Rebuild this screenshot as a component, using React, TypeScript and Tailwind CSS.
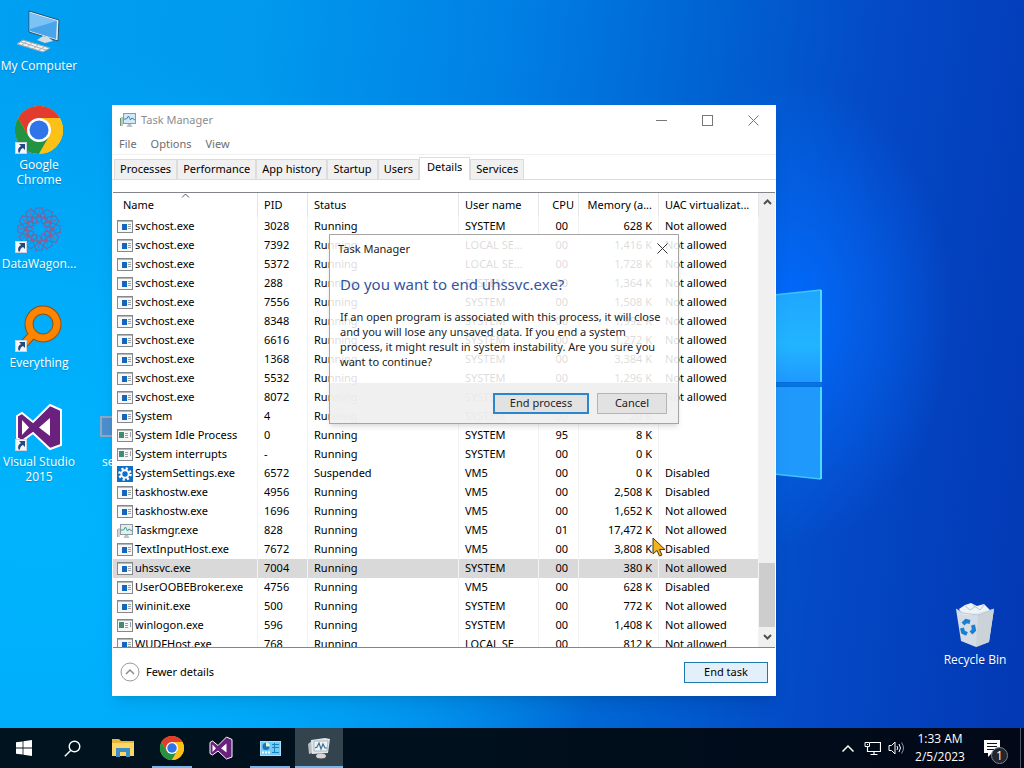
import React from "react";
import { clsx } from "clsx";

type ProcessIcon = "app" | "console" | "settings" | "taskmgr";

interface ProcessRow {
  name: string;
  pid: string;
  status?: string;
  user: string;
  cpu?: string;
  memory: string;
  uac: string;
  icon?: ProcessIcon;
}

const processes: ProcessRow[] = [
  { name: "svchost.exe", pid: "3028", user: "SYSTEM", memory: "628 K", uac: "Not allowed" },
  { name: "svchost.exe", pid: "7392", user: "LOCAL SE...", memory: "1,416 K", uac: "Not allowed" },
  { name: "svchost.exe", pid: "5372", user: "LOCAL SE...", memory: "1,728 K", uac: "Not allowed" },
  { name: "svchost.exe", pid: "288", user: "SYSTEM", memory: "1,364 K", uac: "Not allowed" },
  { name: "svchost.exe", pid: "7556", user: "SYSTEM", memory: "1,508 K", uac: "Not allowed" },
  { name: "svchost.exe", pid: "8348", user: "SYSTEM", memory: "1,992 K", uac: "Not allowed" },
  { name: "svchost.exe", pid: "6616", user: "SYSTEM", memory: "1,272 K", uac: "Not allowed" },
  { name: "svchost.exe", pid: "1368", user: "SYSTEM", memory: "3,384 K", uac: "Not allowed" },
  { name: "svchost.exe", pid: "5532", user: "SYSTEM", memory: "1,296 K", uac: "Not allowed" },
  { name: "svchost.exe", pid: "8072", user: "SYSTEM", memory: "1,552 K", uac: "Not allowed" },
  { name: "System", pid: "4", user: "SYSTEM", memory: "20 K", uac: "" },
  { name: "System Idle Process", pid: "0", user: "SYSTEM", cpu: "95", memory: "8 K", uac: "", icon: "console" },
  { name: "System interrupts", pid: "-", user: "SYSTEM", memory: "0 K", uac: "", icon: "console" },
  { name: "SystemSettings.exe", pid: "6572", status: "Suspended", user: "VM5", memory: "0 K", uac: "Disabled", icon: "settings" },
  { name: "taskhostw.exe", pid: "4956", user: "VM5", memory: "2,508 K", uac: "Disabled" },
  { name: "taskhostw.exe", pid: "1696", user: "VM5", memory: "1,652 K", uac: "Not allowed" },
  { name: "Taskmgr.exe", pid: "828", user: "VM5", cpu: "01", memory: "17,472 K", uac: "Not allowed", icon: "taskmgr" },
  { name: "TextInputHost.exe", pid: "7672", user: "VM5", memory: "3,808 K", uac: "Disabled" },
  { name: "uhssvc.exe", pid: "7004", user: "SYSTEM", memory: "380 K", uac: "Not allowed" },
  { name: "UserOOBEBroker.exe", pid: "4756", user: "VM5", memory: "628 K", uac: "Disabled" },
  { name: "wininit.exe", pid: "500", user: "SYSTEM", memory: "772 K", uac: "Not allowed" },
  { name: "winlogon.exe", pid: "596", user: "SYSTEM", memory: "1,408 K", uac: "Not allowed", icon: "console" },
  { name: "WUDFHost.exe", pid: "768", user: "LOCAL SE", memory: "812 K", uac: "Not allowed" },
];

const tabs = ["Processes", "Performance", "App history", "Startup", "Users", "Details", "Services"];

const ChromeIcon = ({ size }: { size: number }) => (
  <svg width={size} height={size} viewBox="0 0 48 48">
    <circle cx="24" cy="24" r="24" fill="#fbc116" />
    <path d="M3.2 12 A24 24 0 0 0 24 48 L34.4 30 L24 24 L13.6 30 Z" fill="#229342" />
    <path d="M44.8 12 A24 24 0 0 1 24 48 L34.4 30 L24 12 Z" fill="#fbc116" />
    <path d="M3.2 12 A24 24 0 0 1 44.8 12 L24 12 L13.6 30 Z" fill="#e33b2e" />
    <circle cx="24" cy="24" r="12" fill="#fff" />
    <circle cx="24" cy="24" r="9.5" fill="#2f74e8" />
  </svg>
);

const VisualStudioIcon = ({ size }: { size: number }) => (
  <svg width={size} height={size} viewBox="0 0 48 48">
    <path
      d="M2 13 L7 10 L18 19 L35 2 L46 7 V42 L35 46 L18 30 L7 38 L2 35 Z"
      fill="#6a217e"
      stroke="#fff"
      strokeWidth="2"
    />
    <path d="M7 17 V32 L14 24.500 Z M35 15 L24 24.500 L35 33 Z" fill="#fff" />
  </svg>
);

const ComputerIcon = () => (
  <svg width="48" height="48" viewBox="0 0 48 48">
    <path d="M14 4 L44 13 L43 34 L14 25 Z" fill="#e4eef5" stroke="#294f70" strokeWidth="1" />
    <path d="M15 6 L42 14 L41 32 L15 24 Z" fill="#49a5ea" />
    <path d="M15 6 L42 14 L15 22 Z" fill="#7cc2f4" />
    <path d="M28 29 L33 30 L38 34 L30 36 L22 33 Z" fill="#d5dde2" />
    <path d="M8 33 L35 41 L28 45 L2 37 Z" fill="#f0f0ee" stroke="#98a6ad" strokeWidth="1" />
    <path d="M6 35 L31 43 M11 35 L7 38 M17 36 L12 40 M23 38 L18 42 M29 40 L24 43" stroke="#a9b3b8" strokeWidth="1" />
  </svg>
);

const petals = [0, 30, 60, 90, 120, 150, 180, 210, 240, 270, 300, 330];

const DataWagonIcon = () => (
  <svg width="48" height="48" viewBox="0 0 48 48" fill="none">
    {petals.map((angle) => (
      <g key={angle} transform={`rotate(${angle} 24 24)`}>
        <path d="M24 18 L30 11 L27 3 L21 3 L18 11 Z" stroke="#5a6db0" strokeWidth="1" />
        <path d="M24 18 L34 8 M20 12 L28 12" stroke="#84659f" strokeWidth="1" />
        <circle cx="24" cy="11" r="1.500" fill="#a8557f" />
        <circle cx="27" cy="3" r="1.200" fill="#84659f" />
      </g>
    ))}
  </svg>
);

const EverythingIcon = () => (
  <svg width="48" height="48" viewBox="0 0 48 48" fill="none">
    <path d="M18 30 L6 43" stroke="#8a5116" strokeWidth="9" />
    <circle cx="28" cy="20" r="14" stroke="#8a5116" strokeWidth="9" />
    <circle cx="28" cy="20" r="14" stroke="#ff8400" strokeWidth="7" />
    <path d="M18 30 L6 43" stroke="#ff8400" strokeWidth="7" />
  </svg>
);

const RecycleBinIcon = () => (
  <svg width="48" height="48" viewBox="0 0 48 48">
    <path d="M8 8 L14 4 L20 2 L26 5 L33 3 L39 9 L36 14 L12 14 Z" fill="#eef3f6" />
    <path d="M14 5 L19 9 L25 5 M22 4 L29 9 L33 4" stroke="#b9c6ce" fill="none" />
    <path d="M5 8 L17 14 L43 8 L38 41 L25 46 L10 40 Z" fill="#e3e7e9" fillOpacity="0.940" />
    <path d="M27 14 L43 8 L38 41 L25 46 Z" fill="#cbd3d8" />
    <path d="M5 8 L12 12 L27 14 L43 8" stroke="#b4ccdc" fill="none" />
    <g stroke="#1b7fd0" strokeWidth="4" fill="none">
      <path d="M12 23 L15 20 L19 21" />
      <path d="M22 24 L23 29 L20 32" />
      <path d="M16 33 L12 31 L11 27" />
    </g>
  </svg>
);

const TaskManagerIcon = ({ size, muted = false }: { size: number; muted?: boolean }) => (
  <svg width={size} height={size} viewBox="0 0 16 16">
    <path d="M0.500 6 V14 M2 5 V14" stroke={muted ? "#a6aaa9" : "#6d9a72"} strokeWidth="1" />
    <rect x="3.500" y="1.500" width="12" height="10" fill={muted ? "#e4eeec" : "#d4e9f7"} stroke="#8b9aa5" />
    <path d="M4 7 L6.500 7 L8.500 4 L10.500 8 L12 6 L15 8" fill="none" stroke={muted ? "#36a08d" : "#3d7fb0"} />
    <path d="M8 12 H11 L12.500 15 H6.500 Z" fill="#b9c3c9" />
  </svg>
);

const RowIcon = ({ kind }: { kind: ProcessIcon }) => {
  if (kind === "taskmgr") return <TaskManagerIcon size={16} muted />;
  if (kind === "settings") {
    return (
      <svg width="16" height="16" viewBox="0 0 16 16">
        <rect width="16" height="16" fill="#0e6fc4" />
        <circle cx="8" cy="8" r="5.500" fill="none" stroke="#fff" strokeWidth="2.500" strokeDasharray="2.160 2.160" />
        <circle cx="8" cy="8" r="3.700" fill="none" stroke="#fff" strokeWidth="2" />
      </svg>
    );
  }
  return (
    <svg width="16" height="16" viewBox="0 0 16 16">
      <rect x="0.500" y="1.500" width="15" height="12" fill="#f7f7f7" stroke="#85898c" />
      <path d="M1 2.500 H15" stroke="#b5b8ba" />
      {kind === "app" ? (
        <>
          <rect x="5" y="5" width="5" height="6" fill="#1466bd" />
          <path d="M11 5.500 H14 M11 7.500 H14 M11 9.500 H14" stroke="#9ba0a4" />
        </>
      ) : (
        <>
          <rect x="2" y="4" width="5" height="6" fill="#3f8a76" />
          <path d="M8 5.500 H11 M8 7.500 H11 M8 9.500 H11 M13.500 4 V9" stroke="#9ba0a4" />
        </>
      )}
    </svg>
  );
};

const ShortcutArrow = () => (
  <svg className="absolute bottom-0 left-0" width="12" height="12" viewBox="0 0 12 12">
    <rect x="0.500" y="0.500" width="11" height="11" fill="#f4f7fa" stroke="#c7d3df" />
    <path d="M4 2 H10 V8 L8 6 Q5 7 5 10.500 L3.500 10.500 Q2 6 6 4 Z" fill="#26487f" />
  </svg>
);

interface DesktopIconProps {
  label: string;
  shortcut?: boolean;
  children: React.ReactNode;
}

const DesktopIcon = ({ label, shortcut, children }: DesktopIconProps) => (
  <button className="flex h-[99px] w-[78px] flex-col items-center gap-[3px] pt-[7px] text-xs leading-[15px] text-white text-shadow-xs">
    <span className="relative block h-12 w-12 shrink-0">
      {children}
      {shortcut && <ShortcutArrow />}
    </span>
    <span className="text-center">{label}</span>
  </button>
);

const Wallpaper = () => (
  <div className="absolute inset-0 bg-[linear-gradient(97deg,#00a0f2_0%,#0099ee_24%,#0080e4_46%,#0063d2_64%,#0449c6_80%,#0338b4_100%)]">
    <div className="absolute inset-0 bg-[radial-gradient(ellipse_58%_66%_at_4%_72%,#00b4fc_0%,#00aefc_40%,transparent_100%)]" />
    <div className="absolute inset-0 bg-[radial-gradient(ellipse_16%_32%_at_77%_43%,#006aff_0%,#0468f5aa_40%,transparent_100%)]" />
    <svg className="absolute inset-0 h-full w-full" viewBox="0 0 1024 728" preserveAspectRatio="none">
      <defs>
        <linearGradient id="pane" x1="0" y1="0" x2="0" y2="1">
          <stop offset="0" stopColor="#1fa6ff" />
          <stop offset="0.6" stopColor="#22b4ff" />
          <stop offset="1" stopColor="#1f99ff" />
        </linearGradient>
      </defs>
      <path d="M700 303 L821 290 V382 H700 Z" fill="url(#pane)" />
      <path d="M700 387 H821 V479 L700 466 Z" fill="#2099fd" />
      <path d="M700 303 L821 290 M700 466 L821 479" stroke="#3fc4fb" strokeWidth="1.500" />
      <path d="M821 290 V382 M821 387 V479" stroke="#4fdcfa" strokeWidth="2" />
      <path d="M700 384.500 H822" stroke="#0677d8" strokeWidth="4" />
    </svg>
  </div>
);

const cell = "overflow-hidden border-r border-[#f3f3f3] whitespace-nowrap";
const headCell = "overflow-hidden border-r border-[#e5e5e5] text-left font-normal whitespace-nowrap";

const ProcessTable = () => (
  <div className="mx-px flex min-h-0 flex-1 border-y border-[#82868a]">
    <div className="min-w-0 flex-1 overflow-hidden">
      <table className="w-full table-fixed border-separate border-spacing-0">
        <colgroup>
          <col className="w-[145px]" />
          <col className="w-[50px]" />
          <col className="w-[151px]" />
          <col className="w-20" />
          <col className="w-10" />
          <col className="w-20" />
          <col />
        </colgroup>
        <thead>
          <tr className="h-6">
            <th className={clsx(headCell, "relative pl-2.5")}>
              <svg className="absolute top-0 left-[68px]" width="9" height="5" viewBox="0 0 9 5">
                <path d="M1 4.500 L4.500 1 L8 4.500" fill="none" stroke="#555" />
              </svg>
              Name
            </th>
            <th className={clsx(headCell, "pl-1.5")}>PID</th>
            <th className={clsx(headCell, "pl-1.5")}>Status</th>
            <th className={clsx(headCell, "pl-1.5")}>User name</th>
            <th className={clsx(headCell, "pr-1 text-right")}>CPU</th>
            <th className={clsx(headCell, "pr-1.5 text-right")}>Memory (a...</th>
            <th className={clsx(headCell, "pl-1.5")}>UAC virtualizat...</th>
          </tr>
        </thead>
        <tbody>
          {processes.map((row) => (
            <tr key={row.name + row.pid} className={clsx("h-[19px]", row.pid === "7004" && "bg-[#d9d9d9]")}>
              <td className={clsx(cell, "pl-1")}>
                <span className="flex items-center gap-0.5">
                  <RowIcon kind={row.icon ?? "app"} />
                  {row.name}
                </span>
              </td>
              <td className={clsx(cell, "pl-1.5")}>{row.pid}</td>
              <td className={clsx(cell, "pl-1.5")}>{row.status ?? "Running"}</td>
              <td className={clsx(cell, "pl-1.5")}>{row.user}</td>
              <td className={clsx(cell, "pr-2.5 text-right")}>{row.cpu ?? "00"}</td>
              <td className={clsx(cell, "pr-1.5 text-right")}>{row.memory}</td>
              <td className={clsx(cell, "pl-1.5")}>{row.uac}</td>
            </tr>
          ))}
        </tbody>
      </table>
    </div>
    <div className="flex w-4 flex-col bg-[#f0f0f0]">
      <button aria-label="Scroll up" className="flex h-[17px] items-center justify-center">
        <svg width="9" height="6" viewBox="0 0 9 6">
          <path d="M1 5 L4.500 1.500 L8 5" fill="none" stroke="#505050" strokeWidth="2" />
        </svg>
      </button>
      <div className="flex-1" />
      <div className="h-16 bg-[#cdcdcd]" />
      <button aria-label="Scroll down" className="flex h-5 items-center justify-center">
        <svg width="9" height="6" viewBox="0 0 9 6">
          <path d="M1 1 L4.500 4.500 L8 1" fill="none" stroke="#505050" strokeWidth="2" />
        </svg>
      </button>
    </div>
  </div>
);

const ConfirmDialog = () => (
  <div
    role="dialog"
    aria-labelledby="confirm-title"
    className="absolute top-[129px] left-[217px] w-[350px] border border-[#8f8f8f]/80 bg-white/86 text-[#222] shadow-md"
  >
    <div className="flex h-7 items-center justify-between pr-2.5 pl-2">
      <span id="confirm-title">Task Manager</span>
      <button aria-label="Close dialog" className="mt-2 self-start">
        <svg width="11" height="11" viewBox="0 0 11 11">
          <path d="M0.500 0.500 L10.500 10.500 M10.500 0.500 L0.500 10.500" stroke="#333" />
        </svg>
      </button>
    </div>
    <div className="px-2.5 pt-[11px] pb-3.5">
      <h2 className="text-[15px] leading-5 text-[#33559f]">Do you want to end uhssvc.exe?</h2>
      <p className="pt-[15px] leading-[15px] whitespace-nowrap">
        If an open program is associated with this process, it will close
        <br />
        and you will lose any unsaved data. If you end a system
        <br />
        process, it might result in system instability. Are you sure you
        <br />
        want to continue?
      </p>
    </div>
    <div className="flex h-10 items-center justify-end gap-2 bg-[#ececec]/80 pr-[11px]">
      <button className="h-[21px] w-24 border-2 border-[#2b86cc] bg-[#dedede]/80">End process</button>
      <button className="h-[21px] w-[70px] border border-[#b5b5b5] bg-[#dedede]/80">Cancel</button>
    </div>
  </div>
);

const TaskManagerWindow = () => (
  <section className="absolute top-[105px] right-[248px] bottom-8 left-[112px] flex flex-col bg-white font-['Noto_Sans','Open_Sans',sans-serif] text-[11px] shadow-lg">
    <header className="flex h-[30px] items-center pl-2 text-[#8d8d8d]">
      <TaskManagerIcon size={16} />
      <h1 className="flex-1 pl-[5px]">Task Manager</h1>
      <button aria-label="Minimize" className="flex h-full w-[46px] items-center justify-center">
        <svg width="11" height="11" viewBox="0 0 11 11">
          <path d="M0 5.500 H11" stroke="#777" />
        </svg>
      </button>
      <button aria-label="Maximize" className="flex h-full w-[46px] items-center justify-center">
        <svg width="11" height="11" viewBox="0 0 11 11">
          <rect x="0.500" y="0.500" width="10" height="10" fill="none" stroke="#777" />
        </svg>
      </button>
      <button aria-label="Close" className="flex h-full w-[46px] items-center justify-center">
        <svg width="11" height="11" viewBox="0 0 11 11">
          <path d="M0.500 0.500 L10.500 10.500 M10.500 0.500 L0.500 10.500" stroke="#777" />
        </svg>
      </button>
    </header>
    <nav className="flex h-5 items-center gap-3.5 border-b border-[#f0f0f0] pl-[7px] text-[#6d6d6d]">
      <button>File</button>
      <button>Options</button>
      <button>View</button>
    </nav>
    <div role="tablist" className="flex h-[25px] items-end border-b border-[#dcdcdc] pl-0.5">
      {tabs.map((tab) => (
        <button
          key={tab}
          role="tab"
          aria-selected={tab === "Details"}
          className={clsx(
            "border border-b-0 border-[#dcdcdc] whitespace-nowrap",
            tab === "Details" ? "-mb-px h-[23px] bg-white px-[7px] pb-1" : "h-5 bg-[#f0f0f0] px-[5px]"
          )}
        >
          {tab}
        </button>
      ))}
    </div>
    <div className="h-3" />
    <ProcessTable />
    <footer className="flex h-12 items-center justify-between px-2">
      <button className="flex items-center gap-1.5">
        <svg width="20" height="20" viewBox="0 0 20 20" fill="none">
          <circle cx="10" cy="10" r="9" stroke="#9a9a9a" />
          <path d="M6 12 L10 8 L14 12" stroke="#8a8a8a" strokeWidth="1.500" />
        </svg>
        Fewer details
      </button>
      <button className="h-[21px] w-[84px] border border-[#1f78ad] bg-[#e3f0fa]">End task</button>
    </footer>
    <ConfirmDialog />
  </section>
);

interface TaskButtonProps {
  label: string;
  state?: "running" | "active";
  children: React.ReactNode;
}

const TaskButton = ({ label, state, children }: TaskButtonProps) => (
  <button
    aria-label={label}
    className={clsx(
      "relative flex h-full w-12 items-center justify-center",
      state === "active" && "bg-[#34444f]"
    )}
  >
    {children}
    {state && (
      <span className={clsx("absolute bottom-0 h-0.5 bg-[#79b6ea]", state === "active" ? "inset-x-0" : "inset-x-1")} />
    )}
  </button>
);

const Taskbar = () => (
  <footer className="flex h-10 bg-[linear-gradient(90deg,#00141f_0%,#000e1c_60%,#020818_100%)] text-white">
    <TaskButton label="Start">
      <svg width="16" height="16" viewBox="0 0 16 16" fill="#fff">
        <path d="M0 2.300 L6.600 1.400 V7.600 H0 Z M7.400 1.300 L16 0 V7.600 H7.400 Z M0 8.400 H6.600 V14.600 L0 13.700 Z M7.400 8.400 H16 V16 L7.400 14.700 Z" />
      </svg>
    </TaskButton>
    <TaskButton label="Search">
      <svg width="17" height="17" viewBox="0 0 17 17" fill="none" stroke="#fff" strokeWidth="1.400">
        <circle cx="10.500" cy="6.500" r="5.300" />
        <path d="M6.600 10.400 L0.800 16.200" />
      </svg>
    </TaskButton>
    <div className="flex gap-px pl-[3px]">
      <TaskButton label="File Explorer">
        <svg width="22" height="18" viewBox="0 0 22 18">
          <path d="M0 0 H7 L9 2 H22 V17 H0 Z" fill="#e8b63c" />
          <path d="M0 4 H22 V17 H0 Z" fill="#fcd667" />
          <path d="M4 18 V9 H18 V18 H14 V13 H8 V18 Z" fill="#3b8fc6" />
        </svg>
      </TaskButton>
      <TaskButton label="Google Chrome" state="running">
        <ChromeIcon size={24} />
      </TaskButton>
      <TaskButton label="Visual Studio">
        <VisualStudioIcon size={24} />
      </TaskButton>
      <TaskButton label="Control Panel" state="running">
        <svg width="21" height="15" viewBox="0 0 21 15">
          <rect x="0.500" y="0.500" width="20" height="14" fill="#6fcdf3" stroke="#a8e2f8" />
          <circle cx="6" cy="5.500" r="3.500" fill="#1d6fc0" />
          <path d="M6 5.500 V1.500 A4 4 0 0 1 10 5.500 Z" fill="#e9f3c8" />
          <path d="M12 3.500 H19 M12 6.500 H19 M12 11.500 H19 M14.500 2 V12" stroke="#1f7fc4" />
          <path d="M2 11.500 H4 M5 11.500 H7 M8 11.500 H10" stroke="#fff" strokeWidth="2" />
        </svg>
      </TaskButton>
      <TaskButton label="Task Manager" state="active">
        <svg width="24" height="22" viewBox="0 0 24 22">
          <path d="M1 7 L6 3 V16 L2 17 Z" fill="#b9bec1" />
          <path d="M4 3 L18 1 L23 2 L21 16 L5 17 Z" fill="#dfe5e8" />
          <path d="M7 4 L21 4 L20 14 L7 14 Z" fill="#edf3f6" stroke="#9eabb2" strokeWidth="0.800" />
          <path d="M8 11 L10 10 L12 6 L14 12 L16 7 L18 11 L20 11" fill="none" stroke="#3c718f" strokeWidth="1.200" />
          <ellipse cx="14" cy="19" rx="5" ry="2.500" fill="#d9d3d2" />
        </svg>
      </TaskButton>
    </div>
    <div className="ml-auto flex items-center">
      <button aria-label="Show hidden icons" className="w-6">
        <svg className="mx-auto" width="12" height="7" viewBox="0 0 12 7" fill="none" stroke="#fff" strokeWidth="1.500">
          <path d="M0.500 6.500 L6 1 L11.500 6.500" />
        </svg>
      </button>
      <button aria-label="Network" className="w-6">
        <svg className="mx-auto" width="17" height="15" viewBox="0 0 17 15" fill="none" stroke="#fff">
          <path d="M6 1.500 H16.500 V10.500 H3.500 V6 M10 10.500 V13.500 M6.500 13.500 H13.500" strokeWidth="1.200" />
          <path d="M1 1.500 H5.500 V5.500 H1 Z M3.500 3 V4" />
        </svg>
      </button>
      <button aria-label="Volume" className="w-6">
        <svg className="mx-auto" width="17" height="14" viewBox="0 0 17 14" fill="none" stroke="#fff">
          <path d="M1 4.500 H3.500 L7 1 V13 L3.500 9.500 H1 Z" />
          <path d="M9 5 Q10.500 7 9 9 M11 3 Q14 7 11 11" />
          <path d="M13.500 1.500 Q17.500 7 13.500 12.500" stroke="#8b98a3" />
        </svg>
      </button>
      <div className="w-16 text-center leading-[18px]">
        <div>1:33 AM</div>
        <div>2/5/2023</div>
      </div>
      <button aria-label="Notifications" className="relative flex h-10 w-10 items-center justify-center">
        <svg width="16" height="17" viewBox="0 0 16 17">
          <path d="M0 0 H16 V13 H8 L4 17 V13 H0 Z" fill="#fff" />
          <path d="M3 3.500 H13 M3 6.500 H13 M3 9.500 H13" stroke="#06121d" />
        </svg>
        <span className="absolute right-1 bottom-1 flex h-[17px] w-[17px] items-center justify-center rounded-full border border-[#7b828a] bg-[#20262d]">
          1
        </span>
      </button>
      <div className="ml-2 h-10 w-1 border-l border-[#4d5966]" />
    </div>
  </footer>
);

const App = () => (
  <div className="flex h-screen flex-col overflow-hidden font-['Open_Sans','Liberation_Sans',sans-serif] text-xs text-black">
    <main className="relative min-h-0 flex-1 overflow-hidden">
      <Wallpaper />
      <div className="relative flex w-[78px] flex-col">
        <DesktopIcon label="My Computer">
          <ComputerIcon />
        </DesktopIcon>
        <DesktopIcon label="Google Chrome" shortcut>
          <ChromeIcon size={48} />
        </DesktopIcon>
        <DesktopIcon label="DataWagon..." shortcut>
          <DataWagonIcon />
        </DesktopIcon>
        <DesktopIcon label="Everything" shortcut>
          <EverythingIcon />
        </DesktopIcon>
        <DesktopIcon label="Visual Studio 2015" shortcut>
          <VisualStudioIcon size={48} />
        </DesktopIcon>
      </div>
      <div className="absolute top-[416px] left-[100px] text-white">
        <div className="h-[21px] w-5 border-2 border-[#8fa9c4] bg-[#4a8fd0]" />
        <div className="pt-[17px] pl-0.5 leading-4">se</div>
      </div>
      <div className="absolute right-2.5 bottom-[35px]">
        <DesktopIcon label="Recycle Bin">
          <RecycleBinIcon />
        </DesktopIcon>
      </div>
      <TaskManagerWindow />
      <svg className="absolute top-[537px] left-[652px]" width="14" height="20" viewBox="0 0 14 20">
        <path d="M1 1 V17 L5 13.500 L7.500 19 L10 18 L7.500 12.500 H13 Z" fill="#f5b21a" stroke="#4a3a12" strokeWidth="1" />
      </svg>
    </main>
    <Taskbar />
  </div>
);

export default App;
